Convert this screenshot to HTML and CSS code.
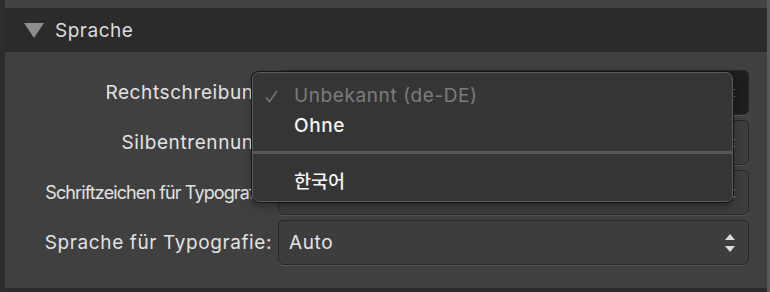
FILE: index.html
```html
<!DOCTYPE html>
<html lang="de">
<head>
  <meta charset="UTF-8">
  <title>Sprache</title>
  <link rel="stylesheet" href="styles.css">
</head>
<body>
  <div class="panel">
    <div class="top-strip"></div>
    <div class="section-header">
      <span class="disclosure"></span>
      <span class="section-title">Sprache</span>
    </div>

    <div class="rows">
      <label class="row-label">Rechtschreibung:</label>
      <div class="select pressed"><span class="value"></span><span class="arrows"><i class="up"></i><i class="down"></i></span></div>

      <label class="row-label">Silbentrennung:</label>
      <div class="select"><span class="value"></span><span class="arrows"><i class="up"></i><i class="down"></i></span></div>

      <label class="row-label condensed">Schriftzeichen für Typografie:</label>
      <div class="select"><span class="value"></span><span class="arrows"><i class="up"></i><i class="down"></i></span></div>

      <label class="row-label">Sprache für Typografie:</label>
      <div class="select"><span class="value">Auto</span><span class="arrows"><i class="up"></i><i class="down"></i></span></div>
    </div>

    <div class="bottom-strip"></div>

    <div class="menu">
      <div class="menu-item disabled">
        <svg class="check" width="13" height="13" viewBox="0 0 13 13"><path d="M1 7.5 L4.5 11.5 L12 1" fill="none" stroke="currentColor" stroke-width="1.4"/></svg>
        Unbekannt (de-DE)
      </div>
      <div class="menu-item">Ohne</div>
      <div class="menu-separator"></div>
      <div class="menu-item korean">한국어</div>
    </div>
  </div>
</body>
</html>
```

FILE: styles.css
```css
body {
  margin: 0;
  background: #2d2d2d;
  font-family: Inter, "Noto Sans", "Noto Sans CJK KR", sans-serif;
  color: #e2e2e2;
  overflow: hidden;
}

.panel {
  position: relative;
  width: 762px;
  height: 292px;
  margin-left: 5px;
  background: #404040;
  border-right: 3px solid #5a5a5a;
  display: flex;
  flex-direction: column;
}

.top-strip {
  height: 8px;
  background: #434343;
}

.section-header {
  height: 44px;
  background: #2b2b2b;
  display: flex;
  align-items: center;
  padding-left: 19px;
}

.disclosure {
  width: 0;
  height: 0;
  border-left: 10px solid transparent;
  border-right: 10px solid transparent;
  border-top: 15px solid #8e8e8e;
  margin-right: 11px;
  margin-top: 1px;
}

.section-title {
  font-size: 19px;
  letter-spacing: 0.5px;
  color: #dcdcdc;
}

.rows {
  flex: 1;
  display: grid;
  grid-template-columns: 267px 471px;
  grid-auto-rows: 45px;
  row-gap: 5px;
  column-gap: 6px;
  padding-top: 18px;
}

.row-label {
  font-size: 19px;
  letter-spacing: 0.6px;
  color: #e2e2e2;
  text-align: right;
  align-self: center;
  white-space: nowrap;
}

.row-label.condensed {
  font-size: 18px;
  letter-spacing: -0.9px;
}

.select {
  border: 1px solid #272727;
  border-radius: 5px;
  background: #3d3d3d;
  box-shadow: 0 1px 0 #555;
  display: flex;
  align-items: center;
  padding: 0 10px;
}

.select.pressed {
  background: #1e1e1e;
}

.value {
  flex: 1;
  font-size: 19px;
  letter-spacing: 0.6px;
  color: #e4e4e4;
}

.arrows {
  display: flex;
  flex-direction: column;
  gap: 6px;
  margin-right: 3px;
}

.arrows i {
  width: 0;
  height: 0;
  border-left: 5px solid transparent;
  border-right: 5px solid transparent;
}

.arrows .up {
  border-bottom: 6px solid #dcdcdc;
}

.arrows .down {
  border-top: 6px solid #dcdcdc;
}

.bottom-strip {
  height: 4px;
  background: #2c2c2c;
}

.menu {
  position: absolute;
  left: 247px;
  top: 72px;
  width: 481px;
  height: 130px;
  box-sizing: border-box;
  background: #353535;
  border: 1px solid #5c5c5c;
  border-radius: 7px;
  box-shadow: 0 0 0 1px #151515, 0 4px 10px rgba(0, 0, 0, 0.35);
  padding-top: 8px;
}

.menu-item {
  position: relative;
  height: 30px;
  line-height: 30px;
  padding-left: 41px;
  font-size: 19px;
  letter-spacing: 0.6px;
  font-weight: 500;
  color: #f4f4f4;
}

.menu-item.disabled {
  color: #7c7c7c;
  font-weight: 400;
}

.check {
  position: absolute;
  left: 12px;
  top: 9px;
  color: #777;
}

.menu-separator {
  height: 3px;
  background: #585858;
  margin: 10px 0 11px;
}

.korean {
  font-family: "Noto Sans CJK KR", sans-serif;
  font-size: 18.5px;
  letter-spacing: 0;
}
```
